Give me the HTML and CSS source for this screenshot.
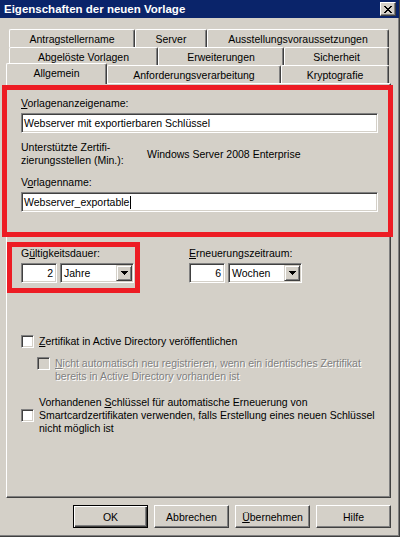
FILE: index.html
```html
<!DOCTYPE html>
<html lang="de">
<head>
    <meta charset="UTF-8">
    <title>Eigenschaften der neuen Vorlage</title>
    <link rel="stylesheet" href="styles.css">
</head>
<body>
<div class="window">
    <!-- Titelleiste -->
    <div class="titlebar">
        <span class="title">Eigenschaften der neuen Vorlage</span>
        <div class="close-btn">
            <svg width="8" height="7" viewBox="0 0 8 7" shape-rendering="crispEdges"><path d="M0 0h2v1h1v1h2v-1h1v-1h2v1h-1v1h-1v1h-1v1h1v1h1v1h1v1h-2v-1h-1v-1h-2v1h-1v1h-2v-1h1v-1h1v-1h1v-1h-1v-1h-1v-1h-1z" fill="#000"/></svg>
        </div>
    </div>

    <!-- Registerkarten -->
    <div class="tabs">
        <div class="tab-row">
            <div class="tab" style="width: 126px;">Antragstellername</div>
            <div class="tab" style="width: 72px;">Server</div>
            <div class="tab" style="width: 182px;">Ausstellungsvoraussetzungen</div>
        </div>
        <div class="tab-row">
            <div class="tab" style="width: 149px;">Abgelöste Vorlagen</div>
            <div class="tab" style="width: 126px;">Erweiterungen</div>
            <div class="tab" style="width: 105px;">Sicherheit</div>
        </div>
        <div class="tab-row front">
            <div class="tab selected" style="width: 101px;">Allgemein</div>
            <div class="tab" style="width: 174px;">Anforderungsverarbeitung</div>
            <div class="tab" style="width: 108px;">Kryptografie</div>
        </div>
    </div>

    <div class="panel">
        <div class="label"><u>V</u>orlagenanzeigename:</div>
        <div class="textbox wide">Webserver mit exportierbaren Schlüssel</div>

        <div class="support">
            <div class="support-label">Unterstützte Zertifi-<br>zierungsstellen (Min.):</div>
            <div class="support-value">Windows Server 2008 Enterprise</div>
        </div>

        <div class="label second">V<u>o</u>rlagenname:</div>
        <div class="textbox wide">Webserver_exportable<span class="caret"></span></div>

        <div class="period-row">
            <div class="period">
                <div class="label">G<u>ü</u>ltigkeitsdauer:</div>
                <div class="period-inputs">
                    <div class="textbox number">2</div>
                    <div class="combo">
                        <span class="combo-text">Jahre</span>
                        <span class="combo-btn"><svg width="7" height="4" viewBox="0 0 7 4" shape-rendering="crispEdges"><path d="M0 0h7v1h-1v1h-1v1h-1v1h-1v-1h-1v-1h-1v-1h-1z" fill="#000"/></svg></span>
                    </div>
                </div>
            </div>
            <div class="period">
                <div class="label"><u>E</u>rneuerungszeitraum:</div>
                <div class="period-inputs">
                    <div class="textbox number">6</div>
                    <div class="combo">
                        <span class="combo-text">Wochen</span>
                        <span class="combo-btn"><svg width="7" height="4" viewBox="0 0 7 4" shape-rendering="crispEdges"><path d="M0 0h7v1h-1v1h-1v1h-1v1h-1v-1h-1v-1h-1v-1h-1z" fill="#000"/></svg></span>
                    </div>
                </div>
            </div>
        </div>

        <div class="check first">
            <span class="box"></span>
            <span class="check-text"><u>Z</u>ertifikat in Active Directory veröffentlichen</span>
        </div>
        <div class="check sub disabled">
            <span class="box"></span>
            <span class="check-text"><u>N</u>icht automatisch neu registrieren, wenn ein identisches Zertifikat<br>bereits in Active Directory vorhanden ist</span>
        </div>
        <div class="check last">
            <span class="box"></span>
            <span class="check-text">Vorhandenen <u>S</u>chlüssel für automatische Erneuerung von<br>Smartcardzertifikaten verwenden, falls Erstellung eines neuen Schlüssel<br>nicht möglich ist</span>
        </div>
    </div>

    <!-- Schaltflächen -->
    <div class="buttons">
        <div class="btn default">OK</div>
        <div class="btn">Abbrechen</div>
        <div class="btn"><u>Ü</u>bernehmen</div>
        <div class="btn">Hilfe</div>
    </div>

    <!-- rote Markierungen -->
    <div class="highlight mark-top"></div>
    <div class="highlight mark-period"></div>
</div>
</body>
</html>
```

FILE: styles.css
```css
/* Grundlayout */
body {
    margin: 0;
    font-family: 'Liberation Sans', Arial, sans-serif;
    font-size: 10.5px;
    color: #000;
    background: #d4d0c8;
}

.window {
    position: relative;
    width: 400px;
    height: 537px;
    box-sizing: border-box;
    background: #d4d0c8;
    border-right: 1px solid #404040;
    border-bottom: 1px solid #404040;
    box-shadow: inset -1px -1px #808080;
    overflow: hidden;
}

/* Titelleiste */
.titlebar {
    height: 18px;
    background: #0a246a;
    display: flex;
    align-items: center;
    padding: 0 3px 0 4px;
}

.title {
    color: #fff;
    font-weight: bold;
    font-size: 11.5px;
}

.close-btn {
    margin-left: auto;
    width: 16px;
    height: 14px;
    box-sizing: border-box;
    background: #d4d0c8;
    border: 1px solid;
    border-color: #fff #404040 #404040 #fff;
    box-shadow: inset -1px -1px #808080;
    display: flex;
    align-items: center;
    justify-content: center;
}

/* Registerkarten */
.tabs {
    padding: 11px 0 0 9px;
}

.tab-row {
    display: flex;
    height: 18px;
    align-items: flex-end;
}

.tab {
    height: 18px;
    box-sizing: border-box;
    border-top: 1px solid #fff;
    border-left: 1px solid #fff;
    border-right: 1px solid #404040;
    box-shadow: inset -1px 0 #808080;
    border-radius: 2px 2px 0 0;
    display: flex;
    align-items: center;
    justify-content: center;
    background: #d4d0c8;
    white-space: nowrap;
}

.tab.selected {
    height: 21px;
    margin-left: -3px;
    margin-bottom: -1px;
    padding-bottom: 3px;
    position: relative;
    z-index: 1;
}

/* Registerinhalt */
.panel {
    margin-left: 6px;
    width: 385px;
    height: 415px;
    box-sizing: border-box;
    border-top: 1px solid #fff;
    border-left: 1px solid #fff;
    border-right: 1px solid #404040;
    border-bottom: 1px solid #404040;
    box-shadow: inset -1px -1px #808080;
    padding: 13px 0 0 14px;
}

.label {
    height: 13px;
    line-height: 13px;
}

.label.second {
    margin-top: 9px;
}

.textbox {
    height: 20px;
    box-sizing: border-box;
    background: #fff;
    border: 1px solid;
    border-color: #808080 #fff #fff #808080;
    box-shadow: inset 1px 1px #404040, inset -1px -1px #d4d0c8;
    padding: 0 2px;
    display: flex;
    align-items: center;
    margin-top: 3px;
}

.textbox.wide {
    width: 357px;
}

.caret {
    display: inline-block;
    width: 1px;
    height: 13px;
    background: #000;
    margin-left: 1px;
}

.support {
    display: flex;
    align-items: center;
    margin-top: 8px;
    line-height: 13px;
}

.support-label {
    width: 126px;
}

/* Gültigkeit / Erneuerung */
.period-row {
    display: flex;
    margin-top: 35px;
}

.period {
    width: 168px;
}

.period-inputs {
    display: flex;
    gap: 3px;
    margin-top: 3px;
}

.textbox.number {
    width: 36px;
    margin-top: 0;
    justify-content: flex-end;
    padding-right: 3px;
}

.combo {
    width: 74px;
    height: 20px;
    box-sizing: border-box;
    background: #fff;
    border: 1px solid;
    border-color: #808080 #fff #fff #808080;
    box-shadow: inset 1px 1px #404040, inset -1px -1px #d4d0c8;
    display: flex;
    align-items: center;
    padding: 1px 1px 1px 3px;
}

.combo-text {
    flex: 1;
}

.combo-btn {
    width: 16px;
    height: 16px;
    box-sizing: border-box;
    background: #d4d0c8;
    border: 1px solid;
    border-color: #d4d0c8 #404040 #404040 #d4d0c8;
    box-shadow: inset 1px 1px #fff, inset -1px -1px #808080;
    display: flex;
    align-items: center;
    justify-content: center;
}

/* Kontrollkästchen */
.check {
    display: flex;
    align-items: center;
    gap: 5px;
    line-height: 13px;
}

.check-text {
    white-space: nowrap;
}

.check.first {
    margin-top: 52px;
}

.check.sub {
    margin-top: 9px;
    margin-left: 16px;
    align-items: flex-start;
}

.check.last {
    margin-top: 13px;
}

.box {
    width: 13px;
    height: 13px;
    flex: none;
    box-sizing: border-box;
    background: #fff;
    border: 1px solid;
    border-color: #808080 #fff #fff #808080;
    box-shadow: inset 1px 1px #404040, inset -1px -1px #d4d0c8;
}

.disabled .box {
    background: #d4d0c8;
}

.disabled .check-text {
    color: #808080;
    text-shadow: 1px 1px #fff;
}

/* Schaltflächen */
.buttons {
    display: flex;
    justify-content: flex-end;
    gap: 6px;
    margin-top: 7px;
    padding-right: 8px;
}

.btn {
    width: 75px;
    height: 23px;
    box-sizing: border-box;
    border: 1px solid;
    border-color: #fff #404040 #404040 #fff;
    box-shadow: inset -1px -1px #808080;
    display: flex;
    align-items: center;
    justify-content: center;
}

.btn.default {
    border: 1px solid #000;
    box-shadow: inset 1px 1px #fff, inset -1px -1px #404040, inset -2px -2px #808080;
}

/* rote Markierungen */
.highlight {
    position: absolute;
    box-sizing: border-box;
    border: 5px solid #ed1c24;
}

.mark-top {
    left: 2px;
    top: 85px;
    width: 391px;
    height: 152px;
}

.mark-period {
    left: 7px;
    top: 242px;
    width: 133px;
    height: 51px;
}
```
